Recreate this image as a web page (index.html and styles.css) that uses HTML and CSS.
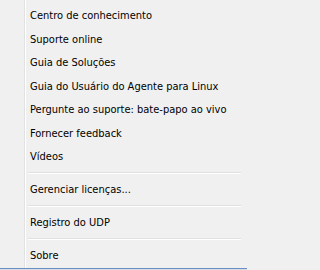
FILE: index.html
```html
<!DOCTYPE html>
<html>
<head>
<meta charset="utf-8">
<link rel="stylesheet" href="styles.css">
</head>
<body>
<div class="menu">
  <div class="item">Centro de conhecimento</div>
  <div class="item">Suporte online</div>
  <div class="item">Guia de Soluções</div>
  <div class="item">Guia do Usuário do Agente para Linux</div>
  <div class="item">Pergunte ao suporte: bate-papo ao vivo</div>
  <div class="item">Fornecer feedback</div>
  <div class="item">Vídeos</div>
  <div class="sep"></div>
  <div class="item">Gerenciar licenças...</div>
  <div class="sep"></div>
  <div class="item">Registro do UDP</div>
  <div class="sep"></div>
  <div class="item">Sobre</div>
</div>
<div class="bottom"></div>
</body>
</html>
```
FILE: styles.css
```css
html, body {
  margin: 0;
  padding: 0;
  background: #f0f0f0;
}
body {
  width: 247px;
  height: 270px;
  overflow: hidden;
  font-family: "DejaVu Sans Condensed", "DejaVu Sans", sans-serif;
  font-size: 11px;
  color: #000;
}
.menu {
  height: 268px;
  box-sizing: border-box;
  padding-top: 4px;
  background:
    linear-gradient(to right, transparent 24px, #e2e2e2 24px, #e2e2e2 25px, #ffffff 25px, #ffffff 26px, transparent 26px);
  display: flex;
  flex-direction: column;
}
.item {
  flex-shrink: 0;
  height: 23.5px;
  line-height: 23.5px;
  padding-left: 30px;
  white-space: nowrap;
}
.sep {
  flex-shrink: 0;
  height: 9.5px;
  box-sizing: border-box;
  padding-top: 3px;
  margin: 0 6px 0 28px;
}
.sep::before {
  content: "";
  display: block;
  height: 1px;
  background: #e0e0e0;
  border-bottom: 1px solid #ffffff;
}
.bottom {
  height: 2px;
  background: linear-gradient(#6a8ec6 0, #6a8ec6 1px, #d8dde6 1px);
}
```
